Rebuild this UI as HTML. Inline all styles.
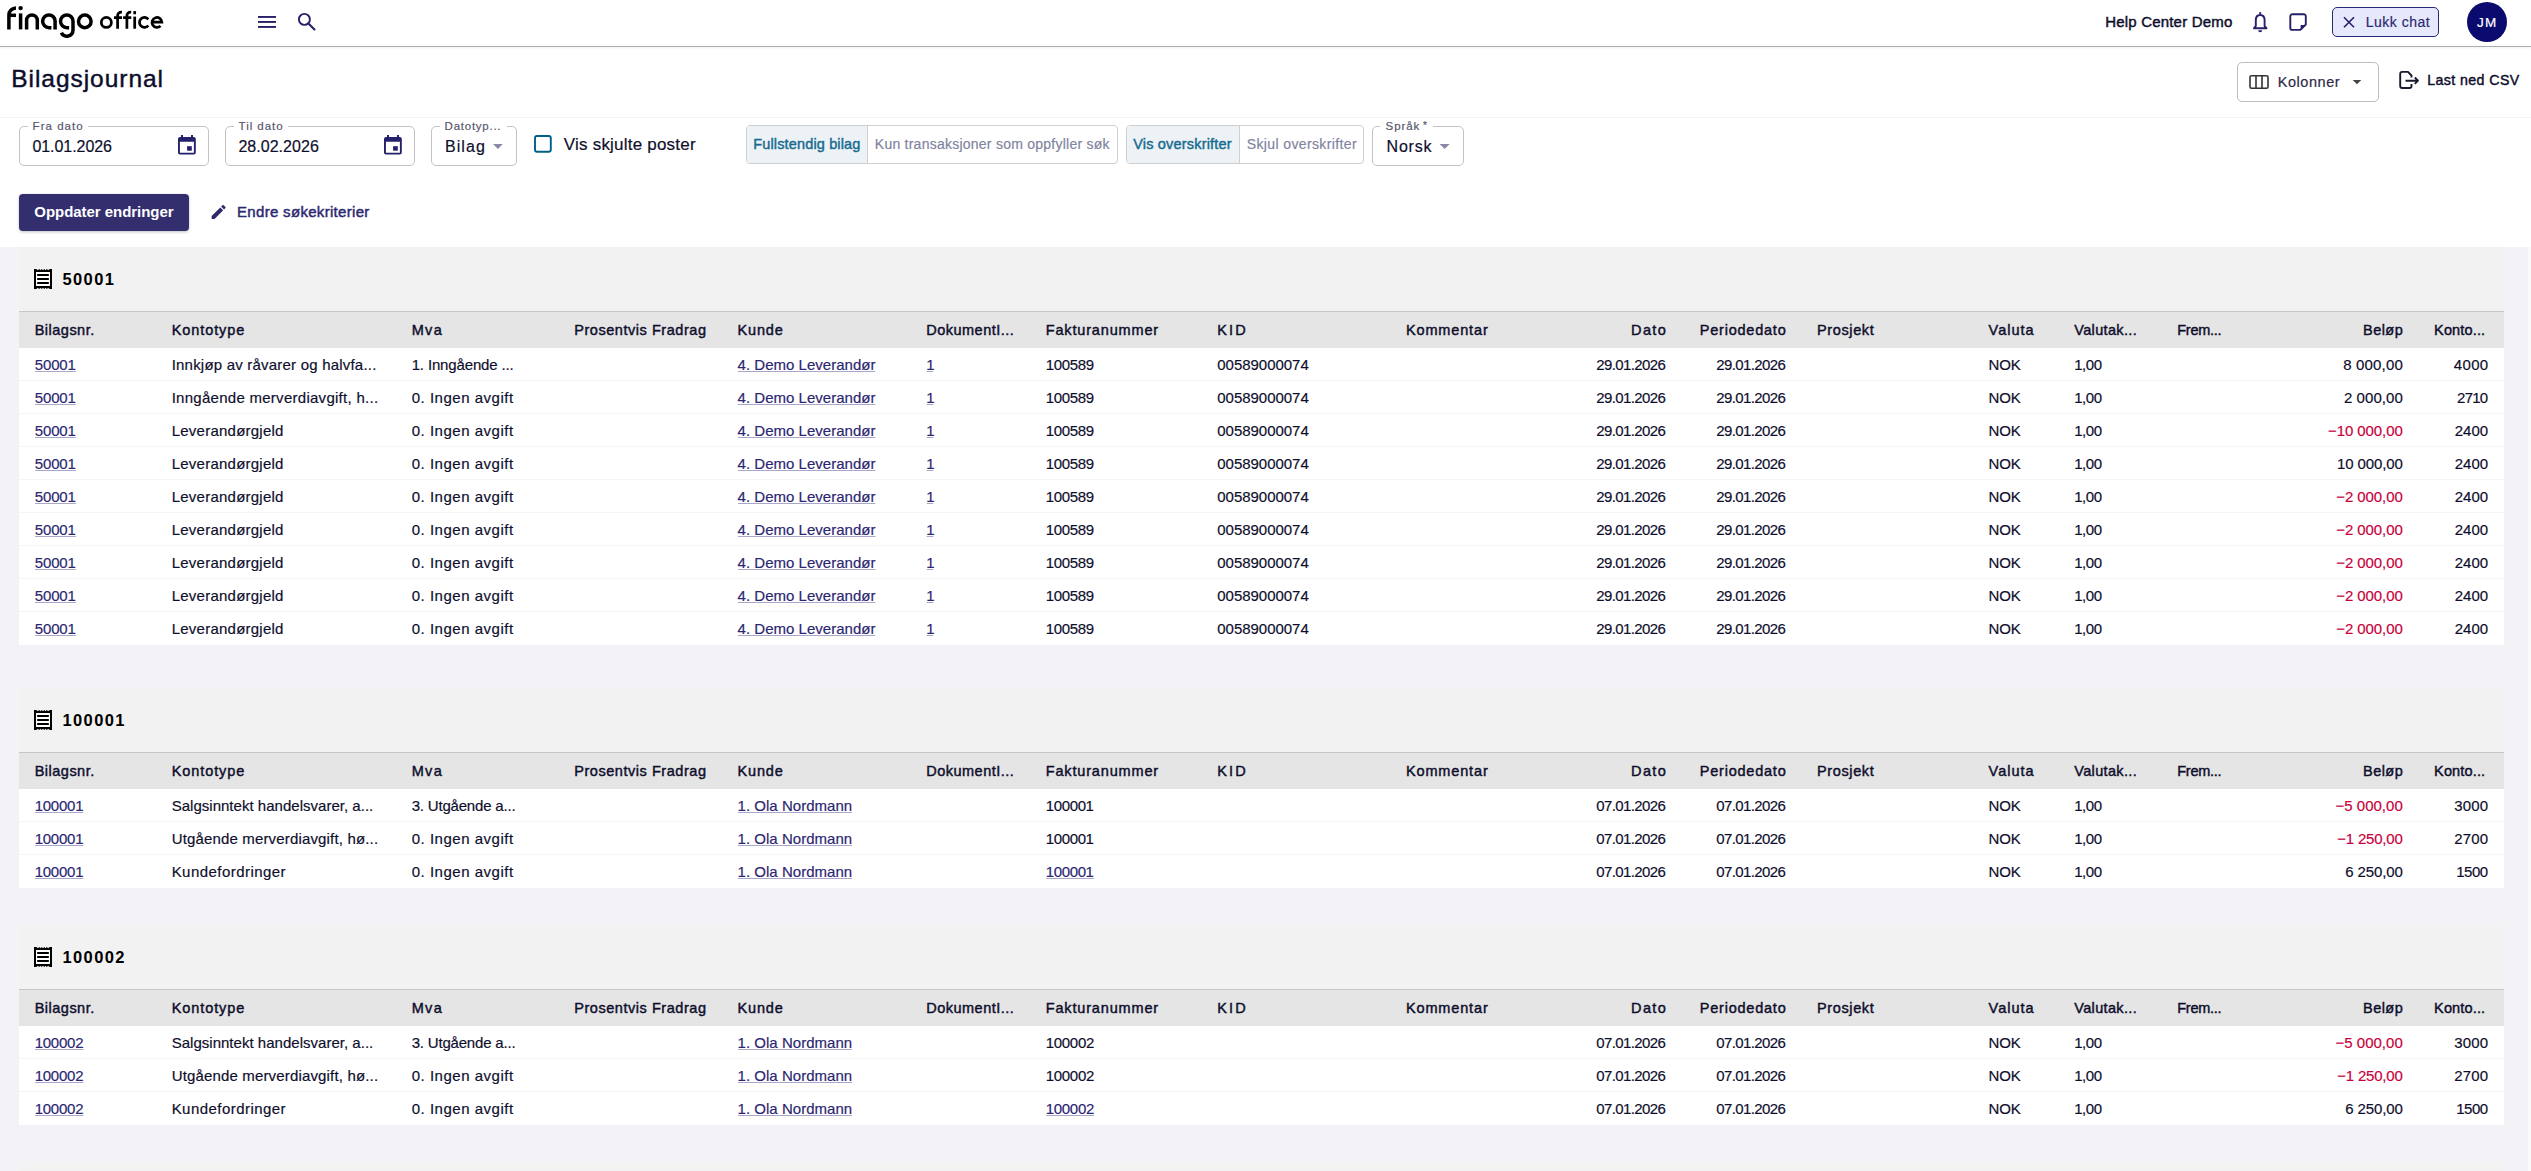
<!DOCTYPE html>
<html><head><meta charset="utf-8"><title>Bilagsjournal</title>
<style>
html,body{margin:0;padding:0}
body{width:2531px;height:1171px;overflow:hidden;background:#fff;position:relative;font-family:"Liberation Sans",sans-serif}
#bg div{position:absolute;box-sizing:border-box}
svg{position:absolute;left:0;top:0}
text{font-family:"Liberation Sans",sans-serif;white-space:pre}
</style></head><body>
<div id="bg">
<div style="left:0px;top:46px;width:2531px;height:1px;background:#adadad;box-shadow:0 1px 2px rgba(0,0,0,.08)"></div>
<div style="left:2332px;top:7px;width:107px;height:30px;background:#e6e8fb;border:1.5px solid #2a2870;border-radius:5px"></div>
<div style="left:2467px;top:2px;width:40px;height:40px;background:#0b0a6e;border-radius:50%"></div>
<div style="left:2237px;top:62px;width:142px;height:40px;border:1px solid #bdbdbd;border-radius:5px;background:#fff"></div>
<div style="left:0px;top:117px;width:2531px;height:1px;background:#f4f4f4"></div>
<div style="left:19px;top:126px;width:190px;height:40px;border:1px solid #c4c4c4;border-radius:5px;background:#fff"></div>
<div style="left:28px;top:125px;width:60px;height:3px;background:#fff"></div>
<div style="left:225px;top:126px;width:190px;height:40px;border:1px solid #c4c4c4;border-radius:5px;background:#fff"></div>
<div style="left:234px;top:125px;width:54px;height:3px;background:#fff"></div>
<div style="left:431px;top:126px;width:86px;height:40px;border:1px solid #c4c4c4;border-radius:5px;background:#fff"></div>
<div style="left:440px;top:125px;width:67px;height:3px;background:#fff"></div>
<div style="left:746px;top:125px;width:372px;height:39px;border:1px solid #cfcfcf;border-radius:4px;background:#fff;overflow:hidden"></div>
<div style="left:747px;top:126px;width:120px;height:37px;background:#ecf2f6;border-radius:3px 0 0 3px"></div>
<div style="left:867px;top:126px;width:1px;height:37px;background:#cfcfcf"></div>
<div style="left:1126px;top:125px;width:238px;height:39px;border:1px solid #cfcfcf;border-radius:4px;background:#fff;overflow:hidden"></div>
<div style="left:1127px;top:126px;width:112px;height:37px;background:#ecf2f6;border-radius:3px 0 0 3px"></div>
<div style="left:1239px;top:126px;width:1px;height:37px;background:#cfcfcf"></div>
<div style="left:1372px;top:126px;width:92px;height:40px;border:1px solid #c4c4c4;border-radius:5px;background:#fff"></div>
<div style="left:1380px;top:125px;width:53px;height:3px;background:#fff"></div>
<div style="left:19px;top:194px;width:170px;height:37px;background:#332e6e;border-radius:4px;box-shadow:0 1px 3px rgba(0,0,0,.25)"></div>
<div style="left:0px;top:247px;width:2528px;height:924px;background:#f2f2f7"></div>
<div style="left:2528px;top:247px;width:3px;height:924px;background:#fafafa"></div>
<div style="left:19px;top:247px;width:2485px;height:64px;background:#f2f2f2"></div>
<div style="left:19px;top:311px;width:2485px;height:37px;background:#e5e5e5;border-top:1px solid #c6c6c6"></div>
<div style="left:19px;top:348px;width:2485px;height:33px;background:#fff;border-bottom:1px solid #f5f5f5"></div>
<div style="left:19px;top:381px;width:2485px;height:33px;background:#fff;border-bottom:1px solid #f5f5f5"></div>
<div style="left:19px;top:414px;width:2485px;height:33px;background:#fff;border-bottom:1px solid #f5f5f5"></div>
<div style="left:19px;top:447px;width:2485px;height:33px;background:#fff;border-bottom:1px solid #f5f5f5"></div>
<div style="left:19px;top:480px;width:2485px;height:33px;background:#fff;border-bottom:1px solid #f5f5f5"></div>
<div style="left:19px;top:513px;width:2485px;height:33px;background:#fff;border-bottom:1px solid #f5f5f5"></div>
<div style="left:19px;top:546px;width:2485px;height:33px;background:#fff;border-bottom:1px solid #f5f5f5"></div>
<div style="left:19px;top:579px;width:2485px;height:33px;background:#fff;border-bottom:1px solid #f5f5f5"></div>
<div style="left:19px;top:612px;width:2485px;height:33px;background:#fff"></div>
<div style="left:19px;top:688px;width:2485px;height:64px;background:#f2f2f2"></div>
<div style="left:19px;top:752px;width:2485px;height:37px;background:#e5e5e5;border-top:1px solid #c6c6c6"></div>
<div style="left:19px;top:789px;width:2485px;height:33px;background:#fff;border-bottom:1px solid #f5f5f5"></div>
<div style="left:19px;top:822px;width:2485px;height:33px;background:#fff;border-bottom:1px solid #f5f5f5"></div>
<div style="left:19px;top:855px;width:2485px;height:33px;background:#fff"></div>
<div style="left:19px;top:925px;width:2485px;height:64px;background:#f2f2f2"></div>
<div style="left:19px;top:989px;width:2485px;height:37px;background:#e5e5e5;border-top:1px solid #c6c6c6"></div>
<div style="left:19px;top:1026px;width:2485px;height:33px;background:#fff;border-bottom:1px solid #f5f5f5"></div>
<div style="left:19px;top:1059px;width:2485px;height:33px;background:#fff;border-bottom:1px solid #f5f5f5"></div>
<div style="left:19px;top:1092px;width:2485px;height:33px;background:#fff"></div>
<div style="left:19px;top:1162px;width:2485px;height:9px;background:#f2f2f2"></div>
</div>
<svg width="2531" height="1171" viewBox="0 0 2531 1171">
<g fill="none" stroke="#000" stroke-width="3.5" stroke-linecap="butt"><path d="M8.9 29.4 V15 A7.1 7.1 0 0 1 16 7.9"/><path d="M9 15.3 H16"/><path d="M20.6 13.4 V29.4"/><path d="M26.6 29.4 V20.35 A5.35 5.35 0 0 1 37.3 20.35 V29.4"/><path d="M51.4 27.7 H49 A6.35 6.35 0 0 1 49 15 A6.1 6.1 0 0 1 55.1 21.1 V29.4"/><path d="M69.1 27.7 H66.85 A6.35 6.35 0 0 1 66.85 15 A6.15 6.15 0 0 1 73 21.15 V30 A6.2 6.2 0 0 1 61.3 32.8"/><circle cx="84.8" cy="21.4" r="6.3"/></g><circle cx="20.6" cy="8.1" r="2.2" fill="#000"/>
<g fill="none" stroke="#000" stroke-width="2.75"><ellipse cx="106.35" cy="22.4" rx="5.05" ry="4.95"/><path d="M117.6 28.7 V15.8 A3.65 3.65 0 0 1 121.25 12.15 H121.9 M114 17.7 H122"/><path d="M126.9 28.7 V15.8 A3.65 3.65 0 0 1 130.55 12.15 H131.2 M123.1 17.7 H131.3"/><path d="M134.7 16.6 V28.7"/><path d="M148.3 19.3 A4.95 4.95 0 1 0 148.3 25.5"/><path d="M152.1 22.2 H161.9 A4.95 4.95 0 1 0 160.5 25.9"/></g><rect x="133.35" y="11.1" width="2.7" height="3.2" rx="0.6" fill="#000"/>
<g fill="#25206a"><rect x="258" y="16" width="18" height="1.9"/><rect x="258" y="21" width="18" height="1.9"/><rect x="258" y="26" width="18" height="1.9"/></g>
<g fill="none" stroke="#25206a" stroke-width="1.9"><circle cx="304.4" cy="19.4" r="5.5"/><path d="M308.4 23.4 L314.5 29.5" stroke-width="2.1" stroke-linecap="round"/></g>
<g fill="none" stroke="#25206a" stroke-width="1.9"><path d="M2254 28.2 H2266.5 L2264.6 26.1 V20.5 C2264.6 17 2262.8 15 2260.2 15 C2257.6 15 2255.8 17 2255.8 20.5 V26.1 Z" stroke-linejoin="round"/></g><circle cx="2260.2" cy="13.2" r="1.1" fill="#25206a"/><path d="M2258.2 30.3 H2262.2 A2 2 0 0 1 2258.2 30.3 Z" fill="#25206a"/>
<path d="M2290.3 16.3 A2 2 0 0 1 2292.3 14.3 H2303.8 A2 2 0 0 1 2305.8 16.3 V24.5 L2300.4 29.9 H2292.3 A2 2 0 0 1 2290.3 27.9 Z" fill="none" stroke="#25206a" stroke-width="1.9" stroke-linejoin="round"/><path d="M2300.6 29.6 V24.9 H2305.4 Z" fill="#25206a"/>
<path d="M2344 17.2 L2354 27.2 M2354 17.2 L2344 27.2" stroke="#25206a" stroke-width="1.6"/>
<g fill="none" stroke="#333" stroke-width="1.6"><rect x="2250" y="75.8" width="18" height="12.4" rx="1.5"/><path d="M2256 75.8 V88.2 M2262 75.8 V88.2"/></g>
<path d="M2352.7 80 H2361.3 L2357 84.2 Z" fill="#444"/>
<g fill="none" stroke="#1a1a2e" stroke-width="1.9" stroke-linejoin="round"><path d="M2411.5 77.5 V75.5 L2408 71.9 H2402.2 A2 2 0 0 0 2400.2 73.9 V86 A2 2 0 0 0 2402.2 88 H2409.5 A2 2 0 0 0 2411.5 86 V84"/><path d="M2405.5 80.7 H2418 M2414.8 77.5 L2418 80.7 L2414.8 83.9"/></g>
<g fill="#25206a"><path fill-rule="evenodd" d="M178 139 A2 2 0 0 1 180 137 H193.8 A2 2 0 0 1 195.8 139 V152.6 A2 2 0 0 1 193.8 154.6 H180 A2 2 0 0 1 178 152.6 Z M179.9 141.7 V152.7 H193.9 V141.7 Z"/><rect x="181" y="135" width="2" height="3"/><rect x="191" y="135" width="2" height="3"/><rect x="187.1" y="146.2" width="4.7" height="4.5"/></g>
<g fill="#25206a"><path fill-rule="evenodd" d="M384 139 A2 2 0 0 1 386 137 H399.8 A2 2 0 0 1 401.8 139 V152.6 A2 2 0 0 1 399.8 154.6 H386 A2 2 0 0 1 384 152.6 Z M385.9 141.7 V152.7 H399.9 V141.7 Z"/><rect x="387" y="135" width="2" height="3"/><rect x="397" y="135" width="2" height="3"/><rect x="393.1" y="146.2" width="4.7" height="4.5"/></g>
<path d="M493 144 H502.8 L497.9 149 Z" fill="#8a89a8"/>
<rect x="535" y="136" width="15.8" height="15.8" rx="2" fill="none" stroke="#005f87" stroke-width="1.9"/>
<path d="M1439.6 144 H1449.7 L1444.6 149 Z" fill="#8a89a8"/>
<path transform="translate(209.3 202.6) scale(0.78)" fill="#2f2a6b" d="M3 17.25V21h3.75L17.81 9.94l-3.75-3.75L3 17.25zM20.71 7.04c.39-.39.39-1.02 0-1.41l-2.34-2.34c-.39-.39-1.02-.39-1.41 0l-1.83 1.83 3.75 3.75 1.83-1.83z"/>
<rect x="35" y="271" width="16" height="16" fill="#fff"/><g fill="#000"><rect x="34" y="269" width="2" height="20"/><rect x="50" y="269" width="2" height="20"/><path d="M34 272 L34.00 269 L35.29 270.3 L36.57 269 L37.86 270.3 L39.14 269 L40.43 270.3 L41.72 269 L43.00 270.3 L44.29 269 L45.57 270.3 L46.86 269 L48.15 270.3 L49.43 269 L50.72 270.3 L52.00 269 V272 Z"/><path d="M52 286 L52.00 289 L50.71 287.7 L49.43 289 L48.14 287.7 L46.86 289 L45.57 287.7 L44.28 289 L43.00 287.7 L41.71 289 L40.43 287.7 L39.14 289 L37.85 287.7 L36.57 289 L35.28 287.7 L34.00 289 V286 Z"/><rect x="37" y="274" width="12" height="2" rx="0.8"/><rect x="37" y="278" width="12" height="2" rx="0.8"/><rect x="37" y="282" width="12" height="2" rx="0.8"/></g>
<rect x="35" y="712" width="16" height="16" fill="#fff"/><g fill="#000"><rect x="34" y="710" width="2" height="20"/><rect x="50" y="710" width="2" height="20"/><path d="M34 713 L34.00 710 L35.29 711.3 L36.57 710 L37.86 711.3 L39.14 710 L40.43 711.3 L41.72 710 L43.00 711.3 L44.29 710 L45.57 711.3 L46.86 710 L48.15 711.3 L49.43 710 L50.72 711.3 L52.00 710 V713 Z"/><path d="M52 727 L52.00 730 L50.71 728.7 L49.43 730 L48.14 728.7 L46.86 730 L45.57 728.7 L44.28 730 L43.00 728.7 L41.71 730 L40.43 728.7 L39.14 730 L37.85 728.7 L36.57 730 L35.28 728.7 L34.00 730 V727 Z"/><rect x="37" y="715" width="12" height="2" rx="0.8"/><rect x="37" y="719" width="12" height="2" rx="0.8"/><rect x="37" y="723" width="12" height="2" rx="0.8"/></g>
<rect x="35" y="949" width="16" height="16" fill="#fff"/><g fill="#000"><rect x="34" y="947" width="2" height="20"/><rect x="50" y="947" width="2" height="20"/><path d="M34 950 L34.00 947 L35.29 948.3 L36.57 947 L37.86 948.3 L39.14 947 L40.43 948.3 L41.72 947 L43.00 948.3 L44.29 947 L45.57 948.3 L46.86 947 L48.15 948.3 L49.43 947 L50.72 948.3 L52.00 947 V950 Z"/><path d="M52 964 L52.00 967 L50.71 965.7 L49.43 967 L48.14 965.7 L46.86 967 L45.57 965.7 L44.28 967 L43.00 965.7 L41.71 967 L40.43 965.7 L39.14 967 L37.85 965.7 L36.57 967 L35.28 965.7 L34.00 967 V964 Z"/><rect x="37" y="952" width="12" height="2" rx="0.8"/><rect x="37" y="956" width="12" height="2" rx="0.8"/><rect x="37" y="960" width="12" height="2" rx="0.8"/></g>
<text x="2105.25" y="26.80" textLength="127.00" lengthAdjust="spacing" style="font-size:15px;fill:#0e0e2c;stroke:#0e0e2c;stroke-width:0.45px">Help Center Demo</text>
<text x="2365.70" y="26.90" textLength="64.00" lengthAdjust="spacing" style="font-size:14px;fill:#2b2870;stroke:#2b2870;stroke-width:0.18px">Lukk chat</text>
<text x="2476.92" y="27.00" textLength="19.35" lengthAdjust="spacing" style="font-size:13.5px;fill:#fff;stroke:#fff;stroke-width:0.18px">JM</text>
<text x="11.18" y="87.10" textLength="151.85" lengthAdjust="spacing" style="font-size:24.5px;fill:#0e0e2c;stroke:#0e0e2c;stroke-width:0.45px">Bilagsjournal</text>
<text x="2277.78" y="87.10" textLength="61.85" lengthAdjust="spacing" style="font-size:14.5px;fill:#2b2945;stroke:#2b2945;stroke-width:0.18px">Kolonner</text>
<text x="2427.29" y="85.00" textLength="91.92" lengthAdjust="spacing" style="font-size:14.2px;fill:#0e0e2c;stroke:#0e0e2c;stroke-width:0.43px">Last ned CSV</text>
<text x="32.62" y="130.00" textLength="49.95" lengthAdjust="spacing" style="font-size:11.5px;fill:#55556e;stroke:#55556e;stroke-width:0.18px">Fra dato</text>
<text x="32.40" y="151.90" textLength="79.60" lengthAdjust="spacing" style="font-size:16px;fill:#0e0e2c;stroke:#0e0e2c;stroke-width:0.18px">01.01.2026</text>
<text x="238.62" y="130.00" textLength="43.95" lengthAdjust="spacing" style="font-size:11.5px;fill:#55556e;stroke:#55556e;stroke-width:0.18px">Til dato</text>
<text x="238.40" y="151.90" textLength="80.40" lengthAdjust="spacing" style="font-size:16px;fill:#0e0e2c;stroke:#0e0e2c;stroke-width:0.18px">28.02.2026</text>
<text x="444.62" y="130.00" textLength="55.95" lengthAdjust="spacing" style="font-size:11.5px;fill:#55556e;stroke:#55556e;stroke-width:0.18px">Datotyp...</text>
<text x="445.00" y="151.90" textLength="39.80" lengthAdjust="spacing" style="font-size:16px;fill:#0e0e2c;stroke:#0e0e2c;stroke-width:0.18px">Bilag</text>
<text x="563.85" y="149.90" textLength="131.70" lengthAdjust="spacing" style="font-size:17px;fill:#0e0e2c;stroke:#0e0e2c;stroke-width:0.18px">Vis skjulte poster</text>
<text x="753.17" y="149.00" textLength="107.25" lengthAdjust="spacing" style="font-size:14.5px;fill:#176b8f;stroke:#176b8f;stroke-width:0.43px">Fullstendig bilag</text>
<text x="874.80" y="149.00" textLength="234.70" lengthAdjust="spacing" style="font-size:14px;fill:#7f83a0;stroke:#7f83a0;stroke-width:0.18px">Kun transaksjoner som oppfyller søk</text>
<text x="1133.18" y="149.00" textLength="98.45" lengthAdjust="spacing" style="font-size:14.5px;fill:#176b8f;stroke:#176b8f;stroke-width:0.43px">Vis overskrifter</text>
<text x="1246.80" y="149.00" textLength="109.80" lengthAdjust="spacing" style="font-size:14px;fill:#7f83a0;stroke:#7f83a0;stroke-width:0.18px">Skjul overskrifter</text>
<text x="1385.62" y="130.00" textLength="33.65" lengthAdjust="spacing" style="font-size:11.5px;fill:#55556e;stroke:#55556e;stroke-width:0.18px">Språk</text>
<text x="1423.00" y="128.50" textLength="5.50" lengthAdjust="spacing" style="font-size:10px;fill:#55556e;stroke:#55556e;stroke-width:0.18px">*</text>
<text x="1386.60" y="152.10" textLength="44.90" lengthAdjust="spacing" style="font-size:16px;fill:#0e0e2c;stroke:#0e0e2c;stroke-width:0.18px">Norsk</text>
<text x="34.35" y="216.90" textLength="139.20" lengthAdjust="spacing" style="font-size:15px;fill:#fff;font-weight:700">Oppdater endringer</text>
<text x="237.05" y="217.00" textLength="132.30" lengthAdjust="spacing" style="font-size:15px;fill:#2b2870;stroke:#2b2870;stroke-width:0.45px">Endre søkekriterier</text>
<text x="62.38" y="285.20" textLength="51.65" lengthAdjust="spacing" style="font-size:16.5px;fill:#000;font-weight:700">50001</text>
<text x="34.67" y="335.30" textLength="59.55" lengthAdjust="spacing" style="font-size:14.5px;fill:#0e0e2c;stroke:#0e0e2c;stroke-width:0.43px">Bilagsnr.</text>
<text x="171.68" y="335.30" textLength="72.65" lengthAdjust="spacing" style="font-size:14.5px;fill:#0e0e2c;stroke:#0e0e2c;stroke-width:0.43px">Kontotype</text>
<text x="411.67" y="335.30" textLength="30.05" lengthAdjust="spacing" style="font-size:14.5px;fill:#0e0e2c;stroke:#0e0e2c;stroke-width:0.43px">Mva</text>
<text x="574.27" y="335.30" textLength="131.75" lengthAdjust="spacing" style="font-size:14.5px;fill:#0e0e2c;stroke:#0e0e2c;stroke-width:0.43px">Prosentvis Fradrag</text>
<text x="737.57" y="335.30" textLength="45.15" lengthAdjust="spacing" style="font-size:14.5px;fill:#0e0e2c;stroke:#0e0e2c;stroke-width:0.43px">Kunde</text>
<text x="926.27" y="335.30" textLength="87.45" lengthAdjust="spacing" style="font-size:14.5px;fill:#0e0e2c;stroke:#0e0e2c;stroke-width:0.43px">DokumentI...</text>
<text x="1045.78" y="335.30" textLength="112.35" lengthAdjust="spacing" style="font-size:14.5px;fill:#0e0e2c;stroke:#0e0e2c;stroke-width:0.43px">Fakturanummer</text>
<text x="1217.28" y="335.30" textLength="28.45" lengthAdjust="spacing" style="font-size:14.5px;fill:#0e0e2c;stroke:#0e0e2c;stroke-width:0.43px">KID</text>
<text x="1405.98" y="335.30" textLength="81.75" lengthAdjust="spacing" style="font-size:14.5px;fill:#0e0e2c;stroke:#0e0e2c;stroke-width:0.43px">Kommentar</text>
<text x="1665.72" y="335.30" text-anchor="end" textLength="34.65" lengthAdjust="spacing" style="font-size:14.5px;fill:#0e0e2c;stroke:#0e0e2c;stroke-width:0.43px">Dato</text>
<text x="1785.72" y="335.30" text-anchor="end" textLength="85.85" lengthAdjust="spacing" style="font-size:14.5px;fill:#0e0e2c;stroke:#0e0e2c;stroke-width:0.43px">Periodedato</text>
<text x="1816.98" y="335.30" textLength="56.75" lengthAdjust="spacing" style="font-size:14.5px;fill:#0e0e2c;stroke:#0e0e2c;stroke-width:0.43px">Prosjekt</text>
<text x="1988.58" y="335.30" textLength="44.95" lengthAdjust="spacing" style="font-size:14.5px;fill:#0e0e2c;stroke:#0e0e2c;stroke-width:0.43px">Valuta</text>
<text x="2074.18" y="335.30" textLength="62.55" lengthAdjust="spacing" style="font-size:14.5px;fill:#0e0e2c;stroke:#0e0e2c;stroke-width:0.43px">Valutak...</text>
<text x="2177.28" y="335.30" textLength="44.25" lengthAdjust="spacing" style="font-size:14.5px;fill:#0e0e2c;stroke:#0e0e2c;stroke-width:0.43px">Frem...</text>
<text x="2402.72" y="335.30" text-anchor="end" textLength="39.65" lengthAdjust="spacing" style="font-size:14.5px;fill:#0e0e2c;stroke:#0e0e2c;stroke-width:0.43px">Beløp</text>
<text x="2434.08" y="335.30" textLength="51.05" lengthAdjust="spacing" style="font-size:14.5px;fill:#0e0e2c;stroke:#0e0e2c;stroke-width:0.43px">Konto...</text>
<text x="34.65" y="370.30" textLength="41.30" lengthAdjust="spacing" style="font-size:15px;fill:#2b2670;stroke:#2b2670;stroke-width:0.18px">50001</text>
<rect x="35.1" y="371.0" width="40.7" height="1" fill="#a9a6c9"/>
<text x="171.65" y="370.30" textLength="204.70" lengthAdjust="spacing" style="font-size:15px;fill:#0e0e2c;stroke:#0e0e2c;stroke-width:0.18px">Innkjøp av råvarer og halvfa...</text>
<text x="411.65" y="370.30" textLength="102.10" lengthAdjust="spacing" style="font-size:15px;fill:#0e0e2c;stroke:#0e0e2c;stroke-width:0.18px">1. Inngående ...</text>
<text x="737.55" y="370.30" textLength="138.00" lengthAdjust="spacing" style="font-size:15px;fill:#2b2670;stroke:#2b2670;stroke-width:0.18px">4. Demo Leverandør</text>
<rect x="738.0" y="371.0" width="137.4" height="1" fill="#a9a6c9"/>
<text x="926.25" y="370.30" textLength="7.20" lengthAdjust="spacing" style="font-size:15px;fill:#2b2670;stroke:#2b2670;stroke-width:0.18px">1</text>
<rect x="926.7" y="371.0" width="6.6" height="1" fill="#a9a6c9"/>
<text x="1045.75" y="370.30" textLength="48.40" lengthAdjust="spacing" style="font-size:15px;fill:#0e0e2c;stroke:#0e0e2c;stroke-width:0.18px">100589</text>
<text x="1217.25" y="370.30" textLength="91.50" lengthAdjust="spacing" style="font-size:15px;fill:#0e0e2c;stroke:#0e0e2c;stroke-width:0.18px">00589000074</text>
<text x="1665.75" y="370.30" text-anchor="end" textLength="69.50" lengthAdjust="spacing" style="font-size:15px;fill:#0e0e2c;stroke:#0e0e2c;stroke-width:0.18px">29.01.2026</text>
<text x="1785.75" y="370.30" text-anchor="end" textLength="69.50" lengthAdjust="spacing" style="font-size:15px;fill:#0e0e2c;stroke:#0e0e2c;stroke-width:0.18px">29.01.2026</text>
<text x="1988.55" y="370.30" textLength="32.20" lengthAdjust="spacing" style="font-size:15px;fill:#0e0e2c;stroke:#0e0e2c;stroke-width:0.18px">NOK</text>
<text x="2074.15" y="370.30" textLength="28.00" lengthAdjust="spacing" style="font-size:15px;fill:#0e0e2c;stroke:#0e0e2c;stroke-width:0.18px">1,00</text>
<text x="2402.75" y="370.30" text-anchor="end" textLength="59.50" lengthAdjust="spacing" style="font-size:15px;fill:#0e0e2c;stroke:#0e0e2c;stroke-width:0.18px">8 000,00</text>
<text x="2488.15" y="370.30" text-anchor="end" textLength="34.30" lengthAdjust="spacing" style="font-size:15px;fill:#0e0e2c;stroke:#0e0e2c;stroke-width:0.18px">4000</text>
<text x="34.65" y="403.30" textLength="41.30" lengthAdjust="spacing" style="font-size:15px;fill:#2b2670;stroke:#2b2670;stroke-width:0.18px">50001</text>
<rect x="35.1" y="404.0" width="40.7" height="1" fill="#a9a6c9"/>
<text x="171.65" y="403.30" textLength="206.40" lengthAdjust="spacing" style="font-size:15px;fill:#0e0e2c;stroke:#0e0e2c;stroke-width:0.18px">Inngående merverdiavgift, h...</text>
<text x="411.65" y="403.30" textLength="101.50" lengthAdjust="spacing" style="font-size:15px;fill:#0e0e2c;stroke:#0e0e2c;stroke-width:0.18px">0. Ingen avgift</text>
<text x="737.55" y="403.30" textLength="138.00" lengthAdjust="spacing" style="font-size:15px;fill:#2b2670;stroke:#2b2670;stroke-width:0.18px">4. Demo Leverandør</text>
<rect x="738.0" y="404.0" width="137.4" height="1" fill="#a9a6c9"/>
<text x="926.25" y="403.30" textLength="7.20" lengthAdjust="spacing" style="font-size:15px;fill:#2b2670;stroke:#2b2670;stroke-width:0.18px">1</text>
<rect x="926.7" y="404.0" width="6.6" height="1" fill="#a9a6c9"/>
<text x="1045.75" y="403.30" textLength="48.40" lengthAdjust="spacing" style="font-size:15px;fill:#0e0e2c;stroke:#0e0e2c;stroke-width:0.18px">100589</text>
<text x="1217.25" y="403.30" textLength="91.50" lengthAdjust="spacing" style="font-size:15px;fill:#0e0e2c;stroke:#0e0e2c;stroke-width:0.18px">00589000074</text>
<text x="1665.75" y="403.30" text-anchor="end" textLength="69.50" lengthAdjust="spacing" style="font-size:15px;fill:#0e0e2c;stroke:#0e0e2c;stroke-width:0.18px">29.01.2026</text>
<text x="1785.75" y="403.30" text-anchor="end" textLength="69.50" lengthAdjust="spacing" style="font-size:15px;fill:#0e0e2c;stroke:#0e0e2c;stroke-width:0.18px">29.01.2026</text>
<text x="1988.55" y="403.30" textLength="32.20" lengthAdjust="spacing" style="font-size:15px;fill:#0e0e2c;stroke:#0e0e2c;stroke-width:0.18px">NOK</text>
<text x="2074.15" y="403.30" textLength="28.00" lengthAdjust="spacing" style="font-size:15px;fill:#0e0e2c;stroke:#0e0e2c;stroke-width:0.18px">1,00</text>
<text x="2402.75" y="403.30" text-anchor="end" textLength="58.80" lengthAdjust="spacing" style="font-size:15px;fill:#0e0e2c;stroke:#0e0e2c;stroke-width:0.18px">2 000,00</text>
<text x="2488.15" y="403.30" text-anchor="end" textLength="31.10" lengthAdjust="spacing" style="font-size:15px;fill:#0e0e2c;stroke:#0e0e2c;stroke-width:0.18px">2710</text>
<text x="34.65" y="436.30" textLength="41.30" lengthAdjust="spacing" style="font-size:15px;fill:#2b2670;stroke:#2b2670;stroke-width:0.18px">50001</text>
<rect x="35.1" y="437.0" width="40.7" height="1" fill="#a9a6c9"/>
<text x="171.65" y="436.30" textLength="111.80" lengthAdjust="spacing" style="font-size:15px;fill:#0e0e2c;stroke:#0e0e2c;stroke-width:0.18px">Leverandørgjeld</text>
<text x="411.65" y="436.30" textLength="101.50" lengthAdjust="spacing" style="font-size:15px;fill:#0e0e2c;stroke:#0e0e2c;stroke-width:0.18px">0. Ingen avgift</text>
<text x="737.55" y="436.30" textLength="138.00" lengthAdjust="spacing" style="font-size:15px;fill:#2b2670;stroke:#2b2670;stroke-width:0.18px">4. Demo Leverandør</text>
<rect x="738.0" y="437.0" width="137.4" height="1" fill="#a9a6c9"/>
<text x="926.25" y="436.30" textLength="7.20" lengthAdjust="spacing" style="font-size:15px;fill:#2b2670;stroke:#2b2670;stroke-width:0.18px">1</text>
<rect x="926.7" y="437.0" width="6.6" height="1" fill="#a9a6c9"/>
<text x="1045.75" y="436.30" textLength="48.40" lengthAdjust="spacing" style="font-size:15px;fill:#0e0e2c;stroke:#0e0e2c;stroke-width:0.18px">100589</text>
<text x="1217.25" y="436.30" textLength="91.50" lengthAdjust="spacing" style="font-size:15px;fill:#0e0e2c;stroke:#0e0e2c;stroke-width:0.18px">00589000074</text>
<text x="1665.75" y="436.30" text-anchor="end" textLength="69.50" lengthAdjust="spacing" style="font-size:15px;fill:#0e0e2c;stroke:#0e0e2c;stroke-width:0.18px">29.01.2026</text>
<text x="1785.75" y="436.30" text-anchor="end" textLength="69.50" lengthAdjust="spacing" style="font-size:15px;fill:#0e0e2c;stroke:#0e0e2c;stroke-width:0.18px">29.01.2026</text>
<text x="1988.55" y="436.30" textLength="32.20" lengthAdjust="spacing" style="font-size:15px;fill:#0e0e2c;stroke:#0e0e2c;stroke-width:0.18px">NOK</text>
<text x="2074.15" y="436.30" textLength="28.00" lengthAdjust="spacing" style="font-size:15px;fill:#0e0e2c;stroke:#0e0e2c;stroke-width:0.18px">1,00</text>
<text x="2402.75" y="436.30" text-anchor="end" textLength="74.70" lengthAdjust="spacing" style="font-size:15px;fill:#c8003c;stroke:#c8003c;stroke-width:0.18px">−10 000,00</text>
<text x="2488.15" y="436.30" text-anchor="end" textLength="33.50" lengthAdjust="spacing" style="font-size:15px;fill:#0e0e2c;stroke:#0e0e2c;stroke-width:0.18px">2400</text>
<text x="34.65" y="469.30" textLength="41.30" lengthAdjust="spacing" style="font-size:15px;fill:#2b2670;stroke:#2b2670;stroke-width:0.18px">50001</text>
<rect x="35.1" y="470.0" width="40.7" height="1" fill="#a9a6c9"/>
<text x="171.65" y="469.30" textLength="111.80" lengthAdjust="spacing" style="font-size:15px;fill:#0e0e2c;stroke:#0e0e2c;stroke-width:0.18px">Leverandørgjeld</text>
<text x="411.65" y="469.30" textLength="101.50" lengthAdjust="spacing" style="font-size:15px;fill:#0e0e2c;stroke:#0e0e2c;stroke-width:0.18px">0. Ingen avgift</text>
<text x="737.55" y="469.30" textLength="138.00" lengthAdjust="spacing" style="font-size:15px;fill:#2b2670;stroke:#2b2670;stroke-width:0.18px">4. Demo Leverandør</text>
<rect x="738.0" y="470.0" width="137.4" height="1" fill="#a9a6c9"/>
<text x="926.25" y="469.30" textLength="7.20" lengthAdjust="spacing" style="font-size:15px;fill:#2b2670;stroke:#2b2670;stroke-width:0.18px">1</text>
<rect x="926.7" y="470.0" width="6.6" height="1" fill="#a9a6c9"/>
<text x="1045.75" y="469.30" textLength="48.40" lengthAdjust="spacing" style="font-size:15px;fill:#0e0e2c;stroke:#0e0e2c;stroke-width:0.18px">100589</text>
<text x="1217.25" y="469.30" textLength="91.50" lengthAdjust="spacing" style="font-size:15px;fill:#0e0e2c;stroke:#0e0e2c;stroke-width:0.18px">00589000074</text>
<text x="1665.75" y="469.30" text-anchor="end" textLength="69.50" lengthAdjust="spacing" style="font-size:15px;fill:#0e0e2c;stroke:#0e0e2c;stroke-width:0.18px">29.01.2026</text>
<text x="1785.75" y="469.30" text-anchor="end" textLength="69.50" lengthAdjust="spacing" style="font-size:15px;fill:#0e0e2c;stroke:#0e0e2c;stroke-width:0.18px">29.01.2026</text>
<text x="1988.55" y="469.30" textLength="32.20" lengthAdjust="spacing" style="font-size:15px;fill:#0e0e2c;stroke:#0e0e2c;stroke-width:0.18px">NOK</text>
<text x="2074.15" y="469.30" textLength="28.00" lengthAdjust="spacing" style="font-size:15px;fill:#0e0e2c;stroke:#0e0e2c;stroke-width:0.18px">1,00</text>
<text x="2402.75" y="469.30" text-anchor="end" textLength="65.70" lengthAdjust="spacing" style="font-size:15px;fill:#0e0e2c;stroke:#0e0e2c;stroke-width:0.18px">10 000,00</text>
<text x="2488.15" y="469.30" text-anchor="end" textLength="33.50" lengthAdjust="spacing" style="font-size:15px;fill:#0e0e2c;stroke:#0e0e2c;stroke-width:0.18px">2400</text>
<text x="34.65" y="502.30" textLength="41.30" lengthAdjust="spacing" style="font-size:15px;fill:#2b2670;stroke:#2b2670;stroke-width:0.18px">50001</text>
<rect x="35.1" y="503.0" width="40.7" height="1" fill="#a9a6c9"/>
<text x="171.65" y="502.30" textLength="111.80" lengthAdjust="spacing" style="font-size:15px;fill:#0e0e2c;stroke:#0e0e2c;stroke-width:0.18px">Leverandørgjeld</text>
<text x="411.65" y="502.30" textLength="101.50" lengthAdjust="spacing" style="font-size:15px;fill:#0e0e2c;stroke:#0e0e2c;stroke-width:0.18px">0. Ingen avgift</text>
<text x="737.55" y="502.30" textLength="138.00" lengthAdjust="spacing" style="font-size:15px;fill:#2b2670;stroke:#2b2670;stroke-width:0.18px">4. Demo Leverandør</text>
<rect x="738.0" y="503.0" width="137.4" height="1" fill="#a9a6c9"/>
<text x="926.25" y="502.30" textLength="7.20" lengthAdjust="spacing" style="font-size:15px;fill:#2b2670;stroke:#2b2670;stroke-width:0.18px">1</text>
<rect x="926.7" y="503.0" width="6.6" height="1" fill="#a9a6c9"/>
<text x="1045.75" y="502.30" textLength="48.40" lengthAdjust="spacing" style="font-size:15px;fill:#0e0e2c;stroke:#0e0e2c;stroke-width:0.18px">100589</text>
<text x="1217.25" y="502.30" textLength="91.50" lengthAdjust="spacing" style="font-size:15px;fill:#0e0e2c;stroke:#0e0e2c;stroke-width:0.18px">00589000074</text>
<text x="1665.75" y="502.30" text-anchor="end" textLength="69.50" lengthAdjust="spacing" style="font-size:15px;fill:#0e0e2c;stroke:#0e0e2c;stroke-width:0.18px">29.01.2026</text>
<text x="1785.75" y="502.30" text-anchor="end" textLength="69.50" lengthAdjust="spacing" style="font-size:15px;fill:#0e0e2c;stroke:#0e0e2c;stroke-width:0.18px">29.01.2026</text>
<text x="1988.55" y="502.30" textLength="32.20" lengthAdjust="spacing" style="font-size:15px;fill:#0e0e2c;stroke:#0e0e2c;stroke-width:0.18px">NOK</text>
<text x="2074.15" y="502.30" textLength="28.00" lengthAdjust="spacing" style="font-size:15px;fill:#0e0e2c;stroke:#0e0e2c;stroke-width:0.18px">1,00</text>
<text x="2402.75" y="502.30" text-anchor="end" textLength="66.50" lengthAdjust="spacing" style="font-size:15px;fill:#c8003c;stroke:#c8003c;stroke-width:0.18px">−2 000,00</text>
<text x="2488.15" y="502.30" text-anchor="end" textLength="33.50" lengthAdjust="spacing" style="font-size:15px;fill:#0e0e2c;stroke:#0e0e2c;stroke-width:0.18px">2400</text>
<text x="34.65" y="535.30" textLength="41.30" lengthAdjust="spacing" style="font-size:15px;fill:#2b2670;stroke:#2b2670;stroke-width:0.18px">50001</text>
<rect x="35.1" y="536.0" width="40.7" height="1" fill="#a9a6c9"/>
<text x="171.65" y="535.30" textLength="111.80" lengthAdjust="spacing" style="font-size:15px;fill:#0e0e2c;stroke:#0e0e2c;stroke-width:0.18px">Leverandørgjeld</text>
<text x="411.65" y="535.30" textLength="101.50" lengthAdjust="spacing" style="font-size:15px;fill:#0e0e2c;stroke:#0e0e2c;stroke-width:0.18px">0. Ingen avgift</text>
<text x="737.55" y="535.30" textLength="138.00" lengthAdjust="spacing" style="font-size:15px;fill:#2b2670;stroke:#2b2670;stroke-width:0.18px">4. Demo Leverandør</text>
<rect x="738.0" y="536.0" width="137.4" height="1" fill="#a9a6c9"/>
<text x="926.25" y="535.30" textLength="7.20" lengthAdjust="spacing" style="font-size:15px;fill:#2b2670;stroke:#2b2670;stroke-width:0.18px">1</text>
<rect x="926.7" y="536.0" width="6.6" height="1" fill="#a9a6c9"/>
<text x="1045.75" y="535.30" textLength="48.40" lengthAdjust="spacing" style="font-size:15px;fill:#0e0e2c;stroke:#0e0e2c;stroke-width:0.18px">100589</text>
<text x="1217.25" y="535.30" textLength="91.50" lengthAdjust="spacing" style="font-size:15px;fill:#0e0e2c;stroke:#0e0e2c;stroke-width:0.18px">00589000074</text>
<text x="1665.75" y="535.30" text-anchor="end" textLength="69.50" lengthAdjust="spacing" style="font-size:15px;fill:#0e0e2c;stroke:#0e0e2c;stroke-width:0.18px">29.01.2026</text>
<text x="1785.75" y="535.30" text-anchor="end" textLength="69.50" lengthAdjust="spacing" style="font-size:15px;fill:#0e0e2c;stroke:#0e0e2c;stroke-width:0.18px">29.01.2026</text>
<text x="1988.55" y="535.30" textLength="32.20" lengthAdjust="spacing" style="font-size:15px;fill:#0e0e2c;stroke:#0e0e2c;stroke-width:0.18px">NOK</text>
<text x="2074.15" y="535.30" textLength="28.00" lengthAdjust="spacing" style="font-size:15px;fill:#0e0e2c;stroke:#0e0e2c;stroke-width:0.18px">1,00</text>
<text x="2402.75" y="535.30" text-anchor="end" textLength="66.50" lengthAdjust="spacing" style="font-size:15px;fill:#c8003c;stroke:#c8003c;stroke-width:0.18px">−2 000,00</text>
<text x="2488.15" y="535.30" text-anchor="end" textLength="33.50" lengthAdjust="spacing" style="font-size:15px;fill:#0e0e2c;stroke:#0e0e2c;stroke-width:0.18px">2400</text>
<text x="34.65" y="568.30" textLength="41.30" lengthAdjust="spacing" style="font-size:15px;fill:#2b2670;stroke:#2b2670;stroke-width:0.18px">50001</text>
<rect x="35.1" y="569.0" width="40.7" height="1" fill="#a9a6c9"/>
<text x="171.65" y="568.30" textLength="111.80" lengthAdjust="spacing" style="font-size:15px;fill:#0e0e2c;stroke:#0e0e2c;stroke-width:0.18px">Leverandørgjeld</text>
<text x="411.65" y="568.30" textLength="101.50" lengthAdjust="spacing" style="font-size:15px;fill:#0e0e2c;stroke:#0e0e2c;stroke-width:0.18px">0. Ingen avgift</text>
<text x="737.55" y="568.30" textLength="138.00" lengthAdjust="spacing" style="font-size:15px;fill:#2b2670;stroke:#2b2670;stroke-width:0.18px">4. Demo Leverandør</text>
<rect x="738.0" y="569.0" width="137.4" height="1" fill="#a9a6c9"/>
<text x="926.25" y="568.30" textLength="7.20" lengthAdjust="spacing" style="font-size:15px;fill:#2b2670;stroke:#2b2670;stroke-width:0.18px">1</text>
<rect x="926.7" y="569.0" width="6.6" height="1" fill="#a9a6c9"/>
<text x="1045.75" y="568.30" textLength="48.40" lengthAdjust="spacing" style="font-size:15px;fill:#0e0e2c;stroke:#0e0e2c;stroke-width:0.18px">100589</text>
<text x="1217.25" y="568.30" textLength="91.50" lengthAdjust="spacing" style="font-size:15px;fill:#0e0e2c;stroke:#0e0e2c;stroke-width:0.18px">00589000074</text>
<text x="1665.75" y="568.30" text-anchor="end" textLength="69.50" lengthAdjust="spacing" style="font-size:15px;fill:#0e0e2c;stroke:#0e0e2c;stroke-width:0.18px">29.01.2026</text>
<text x="1785.75" y="568.30" text-anchor="end" textLength="69.50" lengthAdjust="spacing" style="font-size:15px;fill:#0e0e2c;stroke:#0e0e2c;stroke-width:0.18px">29.01.2026</text>
<text x="1988.55" y="568.30" textLength="32.20" lengthAdjust="spacing" style="font-size:15px;fill:#0e0e2c;stroke:#0e0e2c;stroke-width:0.18px">NOK</text>
<text x="2074.15" y="568.30" textLength="28.00" lengthAdjust="spacing" style="font-size:15px;fill:#0e0e2c;stroke:#0e0e2c;stroke-width:0.18px">1,00</text>
<text x="2402.75" y="568.30" text-anchor="end" textLength="66.50" lengthAdjust="spacing" style="font-size:15px;fill:#c8003c;stroke:#c8003c;stroke-width:0.18px">−2 000,00</text>
<text x="2488.15" y="568.30" text-anchor="end" textLength="33.50" lengthAdjust="spacing" style="font-size:15px;fill:#0e0e2c;stroke:#0e0e2c;stroke-width:0.18px">2400</text>
<text x="34.65" y="601.30" textLength="41.30" lengthAdjust="spacing" style="font-size:15px;fill:#2b2670;stroke:#2b2670;stroke-width:0.18px">50001</text>
<rect x="35.1" y="602.0" width="40.7" height="1" fill="#a9a6c9"/>
<text x="171.65" y="601.30" textLength="111.80" lengthAdjust="spacing" style="font-size:15px;fill:#0e0e2c;stroke:#0e0e2c;stroke-width:0.18px">Leverandørgjeld</text>
<text x="411.65" y="601.30" textLength="101.50" lengthAdjust="spacing" style="font-size:15px;fill:#0e0e2c;stroke:#0e0e2c;stroke-width:0.18px">0. Ingen avgift</text>
<text x="737.55" y="601.30" textLength="138.00" lengthAdjust="spacing" style="font-size:15px;fill:#2b2670;stroke:#2b2670;stroke-width:0.18px">4. Demo Leverandør</text>
<rect x="738.0" y="602.0" width="137.4" height="1" fill="#a9a6c9"/>
<text x="926.25" y="601.30" textLength="7.20" lengthAdjust="spacing" style="font-size:15px;fill:#2b2670;stroke:#2b2670;stroke-width:0.18px">1</text>
<rect x="926.7" y="602.0" width="6.6" height="1" fill="#a9a6c9"/>
<text x="1045.75" y="601.30" textLength="48.40" lengthAdjust="spacing" style="font-size:15px;fill:#0e0e2c;stroke:#0e0e2c;stroke-width:0.18px">100589</text>
<text x="1217.25" y="601.30" textLength="91.50" lengthAdjust="spacing" style="font-size:15px;fill:#0e0e2c;stroke:#0e0e2c;stroke-width:0.18px">00589000074</text>
<text x="1665.75" y="601.30" text-anchor="end" textLength="69.50" lengthAdjust="spacing" style="font-size:15px;fill:#0e0e2c;stroke:#0e0e2c;stroke-width:0.18px">29.01.2026</text>
<text x="1785.75" y="601.30" text-anchor="end" textLength="69.50" lengthAdjust="spacing" style="font-size:15px;fill:#0e0e2c;stroke:#0e0e2c;stroke-width:0.18px">29.01.2026</text>
<text x="1988.55" y="601.30" textLength="32.20" lengthAdjust="spacing" style="font-size:15px;fill:#0e0e2c;stroke:#0e0e2c;stroke-width:0.18px">NOK</text>
<text x="2074.15" y="601.30" textLength="28.00" lengthAdjust="spacing" style="font-size:15px;fill:#0e0e2c;stroke:#0e0e2c;stroke-width:0.18px">1,00</text>
<text x="2402.75" y="601.30" text-anchor="end" textLength="66.50" lengthAdjust="spacing" style="font-size:15px;fill:#c8003c;stroke:#c8003c;stroke-width:0.18px">−2 000,00</text>
<text x="2488.15" y="601.30" text-anchor="end" textLength="33.50" lengthAdjust="spacing" style="font-size:15px;fill:#0e0e2c;stroke:#0e0e2c;stroke-width:0.18px">2400</text>
<text x="34.65" y="634.30" textLength="41.30" lengthAdjust="spacing" style="font-size:15px;fill:#2b2670;stroke:#2b2670;stroke-width:0.18px">50001</text>
<rect x="35.1" y="635.0" width="40.7" height="1" fill="#a9a6c9"/>
<text x="171.65" y="634.30" textLength="111.80" lengthAdjust="spacing" style="font-size:15px;fill:#0e0e2c;stroke:#0e0e2c;stroke-width:0.18px">Leverandørgjeld</text>
<text x="411.65" y="634.30" textLength="101.50" lengthAdjust="spacing" style="font-size:15px;fill:#0e0e2c;stroke:#0e0e2c;stroke-width:0.18px">0. Ingen avgift</text>
<text x="737.55" y="634.30" textLength="138.00" lengthAdjust="spacing" style="font-size:15px;fill:#2b2670;stroke:#2b2670;stroke-width:0.18px">4. Demo Leverandør</text>
<rect x="738.0" y="635.0" width="137.4" height="1" fill="#a9a6c9"/>
<text x="926.25" y="634.30" textLength="7.20" lengthAdjust="spacing" style="font-size:15px;fill:#2b2670;stroke:#2b2670;stroke-width:0.18px">1</text>
<rect x="926.7" y="635.0" width="6.6" height="1" fill="#a9a6c9"/>
<text x="1045.75" y="634.30" textLength="48.40" lengthAdjust="spacing" style="font-size:15px;fill:#0e0e2c;stroke:#0e0e2c;stroke-width:0.18px">100589</text>
<text x="1217.25" y="634.30" textLength="91.50" lengthAdjust="spacing" style="font-size:15px;fill:#0e0e2c;stroke:#0e0e2c;stroke-width:0.18px">00589000074</text>
<text x="1665.75" y="634.30" text-anchor="end" textLength="69.50" lengthAdjust="spacing" style="font-size:15px;fill:#0e0e2c;stroke:#0e0e2c;stroke-width:0.18px">29.01.2026</text>
<text x="1785.75" y="634.30" text-anchor="end" textLength="69.50" lengthAdjust="spacing" style="font-size:15px;fill:#0e0e2c;stroke:#0e0e2c;stroke-width:0.18px">29.01.2026</text>
<text x="1988.55" y="634.30" textLength="32.20" lengthAdjust="spacing" style="font-size:15px;fill:#0e0e2c;stroke:#0e0e2c;stroke-width:0.18px">NOK</text>
<text x="2074.15" y="634.30" textLength="28.00" lengthAdjust="spacing" style="font-size:15px;fill:#0e0e2c;stroke:#0e0e2c;stroke-width:0.18px">1,00</text>
<text x="2402.75" y="634.30" text-anchor="end" textLength="66.50" lengthAdjust="spacing" style="font-size:15px;fill:#c8003c;stroke:#c8003c;stroke-width:0.18px">−2 000,00</text>
<text x="2488.15" y="634.30" text-anchor="end" textLength="33.50" lengthAdjust="spacing" style="font-size:15px;fill:#0e0e2c;stroke:#0e0e2c;stroke-width:0.18px">2400</text>
<text x="62.38" y="726.20" textLength="62.15" lengthAdjust="spacing" style="font-size:16.5px;fill:#000;font-weight:700">100001</text>
<text x="34.67" y="776.30" textLength="59.55" lengthAdjust="spacing" style="font-size:14.5px;fill:#0e0e2c;stroke:#0e0e2c;stroke-width:0.43px">Bilagsnr.</text>
<text x="171.68" y="776.30" textLength="72.65" lengthAdjust="spacing" style="font-size:14.5px;fill:#0e0e2c;stroke:#0e0e2c;stroke-width:0.43px">Kontotype</text>
<text x="411.67" y="776.30" textLength="30.05" lengthAdjust="spacing" style="font-size:14.5px;fill:#0e0e2c;stroke:#0e0e2c;stroke-width:0.43px">Mva</text>
<text x="574.27" y="776.30" textLength="131.75" lengthAdjust="spacing" style="font-size:14.5px;fill:#0e0e2c;stroke:#0e0e2c;stroke-width:0.43px">Prosentvis Fradrag</text>
<text x="737.57" y="776.30" textLength="45.15" lengthAdjust="spacing" style="font-size:14.5px;fill:#0e0e2c;stroke:#0e0e2c;stroke-width:0.43px">Kunde</text>
<text x="926.27" y="776.30" textLength="87.45" lengthAdjust="spacing" style="font-size:14.5px;fill:#0e0e2c;stroke:#0e0e2c;stroke-width:0.43px">DokumentI...</text>
<text x="1045.78" y="776.30" textLength="112.35" lengthAdjust="spacing" style="font-size:14.5px;fill:#0e0e2c;stroke:#0e0e2c;stroke-width:0.43px">Fakturanummer</text>
<text x="1217.28" y="776.30" textLength="28.45" lengthAdjust="spacing" style="font-size:14.5px;fill:#0e0e2c;stroke:#0e0e2c;stroke-width:0.43px">KID</text>
<text x="1405.98" y="776.30" textLength="81.75" lengthAdjust="spacing" style="font-size:14.5px;fill:#0e0e2c;stroke:#0e0e2c;stroke-width:0.43px">Kommentar</text>
<text x="1665.72" y="776.30" text-anchor="end" textLength="34.65" lengthAdjust="spacing" style="font-size:14.5px;fill:#0e0e2c;stroke:#0e0e2c;stroke-width:0.43px">Dato</text>
<text x="1785.72" y="776.30" text-anchor="end" textLength="85.85" lengthAdjust="spacing" style="font-size:14.5px;fill:#0e0e2c;stroke:#0e0e2c;stroke-width:0.43px">Periodedato</text>
<text x="1816.98" y="776.30" textLength="56.75" lengthAdjust="spacing" style="font-size:14.5px;fill:#0e0e2c;stroke:#0e0e2c;stroke-width:0.43px">Prosjekt</text>
<text x="1988.58" y="776.30" textLength="44.95" lengthAdjust="spacing" style="font-size:14.5px;fill:#0e0e2c;stroke:#0e0e2c;stroke-width:0.43px">Valuta</text>
<text x="2074.18" y="776.30" textLength="62.55" lengthAdjust="spacing" style="font-size:14.5px;fill:#0e0e2c;stroke:#0e0e2c;stroke-width:0.43px">Valutak...</text>
<text x="2177.28" y="776.30" textLength="44.25" lengthAdjust="spacing" style="font-size:14.5px;fill:#0e0e2c;stroke:#0e0e2c;stroke-width:0.43px">Frem...</text>
<text x="2402.72" y="776.30" text-anchor="end" textLength="39.65" lengthAdjust="spacing" style="font-size:14.5px;fill:#0e0e2c;stroke:#0e0e2c;stroke-width:0.43px">Beløp</text>
<text x="2434.08" y="776.30" textLength="51.05" lengthAdjust="spacing" style="font-size:14.5px;fill:#0e0e2c;stroke:#0e0e2c;stroke-width:0.43px">Konto...</text>
<text x="34.65" y="811.30" textLength="48.90" lengthAdjust="spacing" style="font-size:15px;fill:#2b2670;stroke:#2b2670;stroke-width:0.18px">100001</text>
<rect x="35.1" y="812.0" width="48.3" height="1" fill="#a9a6c9"/>
<text x="171.65" y="811.30" textLength="201.60" lengthAdjust="spacing" style="font-size:15px;fill:#0e0e2c;stroke:#0e0e2c;stroke-width:0.18px">Salgsinntekt handelsvarer, a...</text>
<text x="411.65" y="811.30" textLength="103.90" lengthAdjust="spacing" style="font-size:15px;fill:#0e0e2c;stroke:#0e0e2c;stroke-width:0.18px">3. Utgående a...</text>
<text x="737.55" y="811.30" textLength="114.60" lengthAdjust="spacing" style="font-size:15px;fill:#2b2670;stroke:#2b2670;stroke-width:0.18px">1. Ola Nordmann</text>
<rect x="738.0" y="812.0" width="114.0" height="1" fill="#a9a6c9"/>
<text x="1045.75" y="811.30" textLength="48.20" lengthAdjust="spacing" style="font-size:15px;fill:#0e0e2c;stroke:#0e0e2c;stroke-width:0.18px">100001</text>
<text x="1665.75" y="811.30" text-anchor="end" textLength="69.50" lengthAdjust="spacing" style="font-size:15px;fill:#0e0e2c;stroke:#0e0e2c;stroke-width:0.18px">07.01.2026</text>
<text x="1785.75" y="811.30" text-anchor="end" textLength="69.50" lengthAdjust="spacing" style="font-size:15px;fill:#0e0e2c;stroke:#0e0e2c;stroke-width:0.18px">07.01.2026</text>
<text x="1988.55" y="811.30" textLength="32.20" lengthAdjust="spacing" style="font-size:15px;fill:#0e0e2c;stroke:#0e0e2c;stroke-width:0.18px">NOK</text>
<text x="2074.15" y="811.30" textLength="28.00" lengthAdjust="spacing" style="font-size:15px;fill:#0e0e2c;stroke:#0e0e2c;stroke-width:0.18px">1,00</text>
<text x="2402.75" y="811.30" text-anchor="end" textLength="67.30" lengthAdjust="spacing" style="font-size:15px;fill:#c8003c;stroke:#c8003c;stroke-width:0.18px">−5 000,00</text>
<text x="2488.15" y="811.30" text-anchor="end" textLength="33.80" lengthAdjust="spacing" style="font-size:15px;fill:#0e0e2c;stroke:#0e0e2c;stroke-width:0.18px">3000</text>
<text x="34.65" y="844.30" textLength="48.90" lengthAdjust="spacing" style="font-size:15px;fill:#2b2670;stroke:#2b2670;stroke-width:0.18px">100001</text>
<rect x="35.1" y="845.0" width="48.3" height="1" fill="#a9a6c9"/>
<text x="171.65" y="844.30" textLength="206.40" lengthAdjust="spacing" style="font-size:15px;fill:#0e0e2c;stroke:#0e0e2c;stroke-width:0.18px">Utgående merverdiavgift, hø...</text>
<text x="411.65" y="844.30" textLength="101.50" lengthAdjust="spacing" style="font-size:15px;fill:#0e0e2c;stroke:#0e0e2c;stroke-width:0.18px">0. Ingen avgift</text>
<text x="737.55" y="844.30" textLength="114.60" lengthAdjust="spacing" style="font-size:15px;fill:#2b2670;stroke:#2b2670;stroke-width:0.18px">1. Ola Nordmann</text>
<rect x="738.0" y="845.0" width="114.0" height="1" fill="#a9a6c9"/>
<text x="1045.75" y="844.30" textLength="48.20" lengthAdjust="spacing" style="font-size:15px;fill:#0e0e2c;stroke:#0e0e2c;stroke-width:0.18px">100001</text>
<text x="1665.75" y="844.30" text-anchor="end" textLength="69.50" lengthAdjust="spacing" style="font-size:15px;fill:#0e0e2c;stroke:#0e0e2c;stroke-width:0.18px">07.01.2026</text>
<text x="1785.75" y="844.30" text-anchor="end" textLength="69.50" lengthAdjust="spacing" style="font-size:15px;fill:#0e0e2c;stroke:#0e0e2c;stroke-width:0.18px">07.01.2026</text>
<text x="1988.55" y="844.30" textLength="32.20" lengthAdjust="spacing" style="font-size:15px;fill:#0e0e2c;stroke:#0e0e2c;stroke-width:0.18px">NOK</text>
<text x="2074.15" y="844.30" textLength="28.00" lengthAdjust="spacing" style="font-size:15px;fill:#0e0e2c;stroke:#0e0e2c;stroke-width:0.18px">1,00</text>
<text x="2402.75" y="844.30" text-anchor="end" textLength="65.50" lengthAdjust="spacing" style="font-size:15px;fill:#c8003c;stroke:#c8003c;stroke-width:0.18px">−1 250,00</text>
<text x="2488.15" y="844.30" text-anchor="end" textLength="33.80" lengthAdjust="spacing" style="font-size:15px;fill:#0e0e2c;stroke:#0e0e2c;stroke-width:0.18px">2700</text>
<text x="34.65" y="877.30" textLength="48.90" lengthAdjust="spacing" style="font-size:15px;fill:#2b2670;stroke:#2b2670;stroke-width:0.18px">100001</text>
<rect x="35.1" y="878.0" width="48.3" height="1" fill="#a9a6c9"/>
<text x="171.65" y="877.30" textLength="113.90" lengthAdjust="spacing" style="font-size:15px;fill:#0e0e2c;stroke:#0e0e2c;stroke-width:0.18px">Kundefordringer</text>
<text x="411.65" y="877.30" textLength="101.50" lengthAdjust="spacing" style="font-size:15px;fill:#0e0e2c;stroke:#0e0e2c;stroke-width:0.18px">0. Ingen avgift</text>
<text x="737.55" y="877.30" textLength="114.60" lengthAdjust="spacing" style="font-size:15px;fill:#2b2670;stroke:#2b2670;stroke-width:0.18px">1. Ola Nordmann</text>
<rect x="738.0" y="878.0" width="114.0" height="1" fill="#a9a6c9"/>
<text x="1045.75" y="877.30" textLength="48.20" lengthAdjust="spacing" style="font-size:15px;fill:#2b2670;stroke:#2b2670;stroke-width:0.18px">100001</text>
<rect x="1046.2" y="878.0" width="47.6" height="1" fill="#a9a6c9"/>
<text x="1665.75" y="877.30" text-anchor="end" textLength="69.50" lengthAdjust="spacing" style="font-size:15px;fill:#0e0e2c;stroke:#0e0e2c;stroke-width:0.18px">07.01.2026</text>
<text x="1785.75" y="877.30" text-anchor="end" textLength="69.50" lengthAdjust="spacing" style="font-size:15px;fill:#0e0e2c;stroke:#0e0e2c;stroke-width:0.18px">07.01.2026</text>
<text x="1988.55" y="877.30" textLength="32.20" lengthAdjust="spacing" style="font-size:15px;fill:#0e0e2c;stroke:#0e0e2c;stroke-width:0.18px">NOK</text>
<text x="2074.15" y="877.30" textLength="28.00" lengthAdjust="spacing" style="font-size:15px;fill:#0e0e2c;stroke:#0e0e2c;stroke-width:0.18px">1,00</text>
<text x="2402.75" y="877.30" text-anchor="end" textLength="57.50" lengthAdjust="spacing" style="font-size:15px;fill:#0e0e2c;stroke:#0e0e2c;stroke-width:0.18px">6 250,00</text>
<text x="2488.15" y="877.30" text-anchor="end" textLength="32.00" lengthAdjust="spacing" style="font-size:15px;fill:#0e0e2c;stroke:#0e0e2c;stroke-width:0.18px">1500</text>
<text x="62.38" y="963.20" textLength="62.15" lengthAdjust="spacing" style="font-size:16.5px;fill:#000;font-weight:700">100002</text>
<text x="34.67" y="1013.30" textLength="59.55" lengthAdjust="spacing" style="font-size:14.5px;fill:#0e0e2c;stroke:#0e0e2c;stroke-width:0.43px">Bilagsnr.</text>
<text x="171.68" y="1013.30" textLength="72.65" lengthAdjust="spacing" style="font-size:14.5px;fill:#0e0e2c;stroke:#0e0e2c;stroke-width:0.43px">Kontotype</text>
<text x="411.67" y="1013.30" textLength="30.05" lengthAdjust="spacing" style="font-size:14.5px;fill:#0e0e2c;stroke:#0e0e2c;stroke-width:0.43px">Mva</text>
<text x="574.27" y="1013.30" textLength="131.75" lengthAdjust="spacing" style="font-size:14.5px;fill:#0e0e2c;stroke:#0e0e2c;stroke-width:0.43px">Prosentvis Fradrag</text>
<text x="737.57" y="1013.30" textLength="45.15" lengthAdjust="spacing" style="font-size:14.5px;fill:#0e0e2c;stroke:#0e0e2c;stroke-width:0.43px">Kunde</text>
<text x="926.27" y="1013.30" textLength="87.45" lengthAdjust="spacing" style="font-size:14.5px;fill:#0e0e2c;stroke:#0e0e2c;stroke-width:0.43px">DokumentI...</text>
<text x="1045.78" y="1013.30" textLength="112.35" lengthAdjust="spacing" style="font-size:14.5px;fill:#0e0e2c;stroke:#0e0e2c;stroke-width:0.43px">Fakturanummer</text>
<text x="1217.28" y="1013.30" textLength="28.45" lengthAdjust="spacing" style="font-size:14.5px;fill:#0e0e2c;stroke:#0e0e2c;stroke-width:0.43px">KID</text>
<text x="1405.98" y="1013.30" textLength="81.75" lengthAdjust="spacing" style="font-size:14.5px;fill:#0e0e2c;stroke:#0e0e2c;stroke-width:0.43px">Kommentar</text>
<text x="1665.72" y="1013.30" text-anchor="end" textLength="34.65" lengthAdjust="spacing" style="font-size:14.5px;fill:#0e0e2c;stroke:#0e0e2c;stroke-width:0.43px">Dato</text>
<text x="1785.72" y="1013.30" text-anchor="end" textLength="85.85" lengthAdjust="spacing" style="font-size:14.5px;fill:#0e0e2c;stroke:#0e0e2c;stroke-width:0.43px">Periodedato</text>
<text x="1816.98" y="1013.30" textLength="56.75" lengthAdjust="spacing" style="font-size:14.5px;fill:#0e0e2c;stroke:#0e0e2c;stroke-width:0.43px">Prosjekt</text>
<text x="1988.58" y="1013.30" textLength="44.95" lengthAdjust="spacing" style="font-size:14.5px;fill:#0e0e2c;stroke:#0e0e2c;stroke-width:0.43px">Valuta</text>
<text x="2074.18" y="1013.30" textLength="62.55" lengthAdjust="spacing" style="font-size:14.5px;fill:#0e0e2c;stroke:#0e0e2c;stroke-width:0.43px">Valutak...</text>
<text x="2177.28" y="1013.30" textLength="44.25" lengthAdjust="spacing" style="font-size:14.5px;fill:#0e0e2c;stroke:#0e0e2c;stroke-width:0.43px">Frem...</text>
<text x="2402.72" y="1013.30" text-anchor="end" textLength="39.65" lengthAdjust="spacing" style="font-size:14.5px;fill:#0e0e2c;stroke:#0e0e2c;stroke-width:0.43px">Beløp</text>
<text x="2434.08" y="1013.30" textLength="51.05" lengthAdjust="spacing" style="font-size:14.5px;fill:#0e0e2c;stroke:#0e0e2c;stroke-width:0.43px">Konto...</text>
<text x="34.65" y="1048.30" textLength="48.90" lengthAdjust="spacing" style="font-size:15px;fill:#2b2670;stroke:#2b2670;stroke-width:0.18px">100002</text>
<rect x="35.1" y="1049.0" width="48.3" height="1" fill="#a9a6c9"/>
<text x="171.65" y="1048.30" textLength="201.60" lengthAdjust="spacing" style="font-size:15px;fill:#0e0e2c;stroke:#0e0e2c;stroke-width:0.18px">Salgsinntekt handelsvarer, a...</text>
<text x="411.65" y="1048.30" textLength="103.90" lengthAdjust="spacing" style="font-size:15px;fill:#0e0e2c;stroke:#0e0e2c;stroke-width:0.18px">3. Utgående a...</text>
<text x="737.55" y="1048.30" textLength="114.60" lengthAdjust="spacing" style="font-size:15px;fill:#2b2670;stroke:#2b2670;stroke-width:0.18px">1. Ola Nordmann</text>
<rect x="738.0" y="1049.0" width="114.0" height="1" fill="#a9a6c9"/>
<text x="1045.75" y="1048.30" textLength="48.50" lengthAdjust="spacing" style="font-size:15px;fill:#0e0e2c;stroke:#0e0e2c;stroke-width:0.18px">100002</text>
<text x="1665.75" y="1048.30" text-anchor="end" textLength="69.50" lengthAdjust="spacing" style="font-size:15px;fill:#0e0e2c;stroke:#0e0e2c;stroke-width:0.18px">07.01.2026</text>
<text x="1785.75" y="1048.30" text-anchor="end" textLength="69.50" lengthAdjust="spacing" style="font-size:15px;fill:#0e0e2c;stroke:#0e0e2c;stroke-width:0.18px">07.01.2026</text>
<text x="1988.55" y="1048.30" textLength="32.20" lengthAdjust="spacing" style="font-size:15px;fill:#0e0e2c;stroke:#0e0e2c;stroke-width:0.18px">NOK</text>
<text x="2074.15" y="1048.30" textLength="28.00" lengthAdjust="spacing" style="font-size:15px;fill:#0e0e2c;stroke:#0e0e2c;stroke-width:0.18px">1,00</text>
<text x="2402.75" y="1048.30" text-anchor="end" textLength="67.30" lengthAdjust="spacing" style="font-size:15px;fill:#c8003c;stroke:#c8003c;stroke-width:0.18px">−5 000,00</text>
<text x="2488.15" y="1048.30" text-anchor="end" textLength="33.80" lengthAdjust="spacing" style="font-size:15px;fill:#0e0e2c;stroke:#0e0e2c;stroke-width:0.18px">3000</text>
<text x="34.65" y="1081.30" textLength="48.90" lengthAdjust="spacing" style="font-size:15px;fill:#2b2670;stroke:#2b2670;stroke-width:0.18px">100002</text>
<rect x="35.1" y="1082.0" width="48.3" height="1" fill="#a9a6c9"/>
<text x="171.65" y="1081.30" textLength="206.40" lengthAdjust="spacing" style="font-size:15px;fill:#0e0e2c;stroke:#0e0e2c;stroke-width:0.18px">Utgående merverdiavgift, hø...</text>
<text x="411.65" y="1081.30" textLength="101.50" lengthAdjust="spacing" style="font-size:15px;fill:#0e0e2c;stroke:#0e0e2c;stroke-width:0.18px">0. Ingen avgift</text>
<text x="737.55" y="1081.30" textLength="114.60" lengthAdjust="spacing" style="font-size:15px;fill:#2b2670;stroke:#2b2670;stroke-width:0.18px">1. Ola Nordmann</text>
<rect x="738.0" y="1082.0" width="114.0" height="1" fill="#a9a6c9"/>
<text x="1045.75" y="1081.30" textLength="48.50" lengthAdjust="spacing" style="font-size:15px;fill:#0e0e2c;stroke:#0e0e2c;stroke-width:0.18px">100002</text>
<text x="1665.75" y="1081.30" text-anchor="end" textLength="69.50" lengthAdjust="spacing" style="font-size:15px;fill:#0e0e2c;stroke:#0e0e2c;stroke-width:0.18px">07.01.2026</text>
<text x="1785.75" y="1081.30" text-anchor="end" textLength="69.50" lengthAdjust="spacing" style="font-size:15px;fill:#0e0e2c;stroke:#0e0e2c;stroke-width:0.18px">07.01.2026</text>
<text x="1988.55" y="1081.30" textLength="32.20" lengthAdjust="spacing" style="font-size:15px;fill:#0e0e2c;stroke:#0e0e2c;stroke-width:0.18px">NOK</text>
<text x="2074.15" y="1081.30" textLength="28.00" lengthAdjust="spacing" style="font-size:15px;fill:#0e0e2c;stroke:#0e0e2c;stroke-width:0.18px">1,00</text>
<text x="2402.75" y="1081.30" text-anchor="end" textLength="65.50" lengthAdjust="spacing" style="font-size:15px;fill:#c8003c;stroke:#c8003c;stroke-width:0.18px">−1 250,00</text>
<text x="2488.15" y="1081.30" text-anchor="end" textLength="33.80" lengthAdjust="spacing" style="font-size:15px;fill:#0e0e2c;stroke:#0e0e2c;stroke-width:0.18px">2700</text>
<text x="34.65" y="1114.30" textLength="48.90" lengthAdjust="spacing" style="font-size:15px;fill:#2b2670;stroke:#2b2670;stroke-width:0.18px">100002</text>
<rect x="35.1" y="1115.0" width="48.3" height="1" fill="#a9a6c9"/>
<text x="171.65" y="1114.30" textLength="113.90" lengthAdjust="spacing" style="font-size:15px;fill:#0e0e2c;stroke:#0e0e2c;stroke-width:0.18px">Kundefordringer</text>
<text x="411.65" y="1114.30" textLength="101.50" lengthAdjust="spacing" style="font-size:15px;fill:#0e0e2c;stroke:#0e0e2c;stroke-width:0.18px">0. Ingen avgift</text>
<text x="737.55" y="1114.30" textLength="114.60" lengthAdjust="spacing" style="font-size:15px;fill:#2b2670;stroke:#2b2670;stroke-width:0.18px">1. Ola Nordmann</text>
<rect x="738.0" y="1115.0" width="114.0" height="1" fill="#a9a6c9"/>
<text x="1045.75" y="1114.30" textLength="48.50" lengthAdjust="spacing" style="font-size:15px;fill:#2b2670;stroke:#2b2670;stroke-width:0.18px">100002</text>
<rect x="1046.2" y="1115.0" width="47.9" height="1" fill="#a9a6c9"/>
<text x="1665.75" y="1114.30" text-anchor="end" textLength="69.50" lengthAdjust="spacing" style="font-size:15px;fill:#0e0e2c;stroke:#0e0e2c;stroke-width:0.18px">07.01.2026</text>
<text x="1785.75" y="1114.30" text-anchor="end" textLength="69.50" lengthAdjust="spacing" style="font-size:15px;fill:#0e0e2c;stroke:#0e0e2c;stroke-width:0.18px">07.01.2026</text>
<text x="1988.55" y="1114.30" textLength="32.20" lengthAdjust="spacing" style="font-size:15px;fill:#0e0e2c;stroke:#0e0e2c;stroke-width:0.18px">NOK</text>
<text x="2074.15" y="1114.30" textLength="28.00" lengthAdjust="spacing" style="font-size:15px;fill:#0e0e2c;stroke:#0e0e2c;stroke-width:0.18px">1,00</text>
<text x="2402.75" y="1114.30" text-anchor="end" textLength="57.50" lengthAdjust="spacing" style="font-size:15px;fill:#0e0e2c;stroke:#0e0e2c;stroke-width:0.18px">6 250,00</text>
<text x="2488.15" y="1114.30" text-anchor="end" textLength="32.00" lengthAdjust="spacing" style="font-size:15px;fill:#0e0e2c;stroke:#0e0e2c;stroke-width:0.18px">1500</text>
</svg>
</body></html>
